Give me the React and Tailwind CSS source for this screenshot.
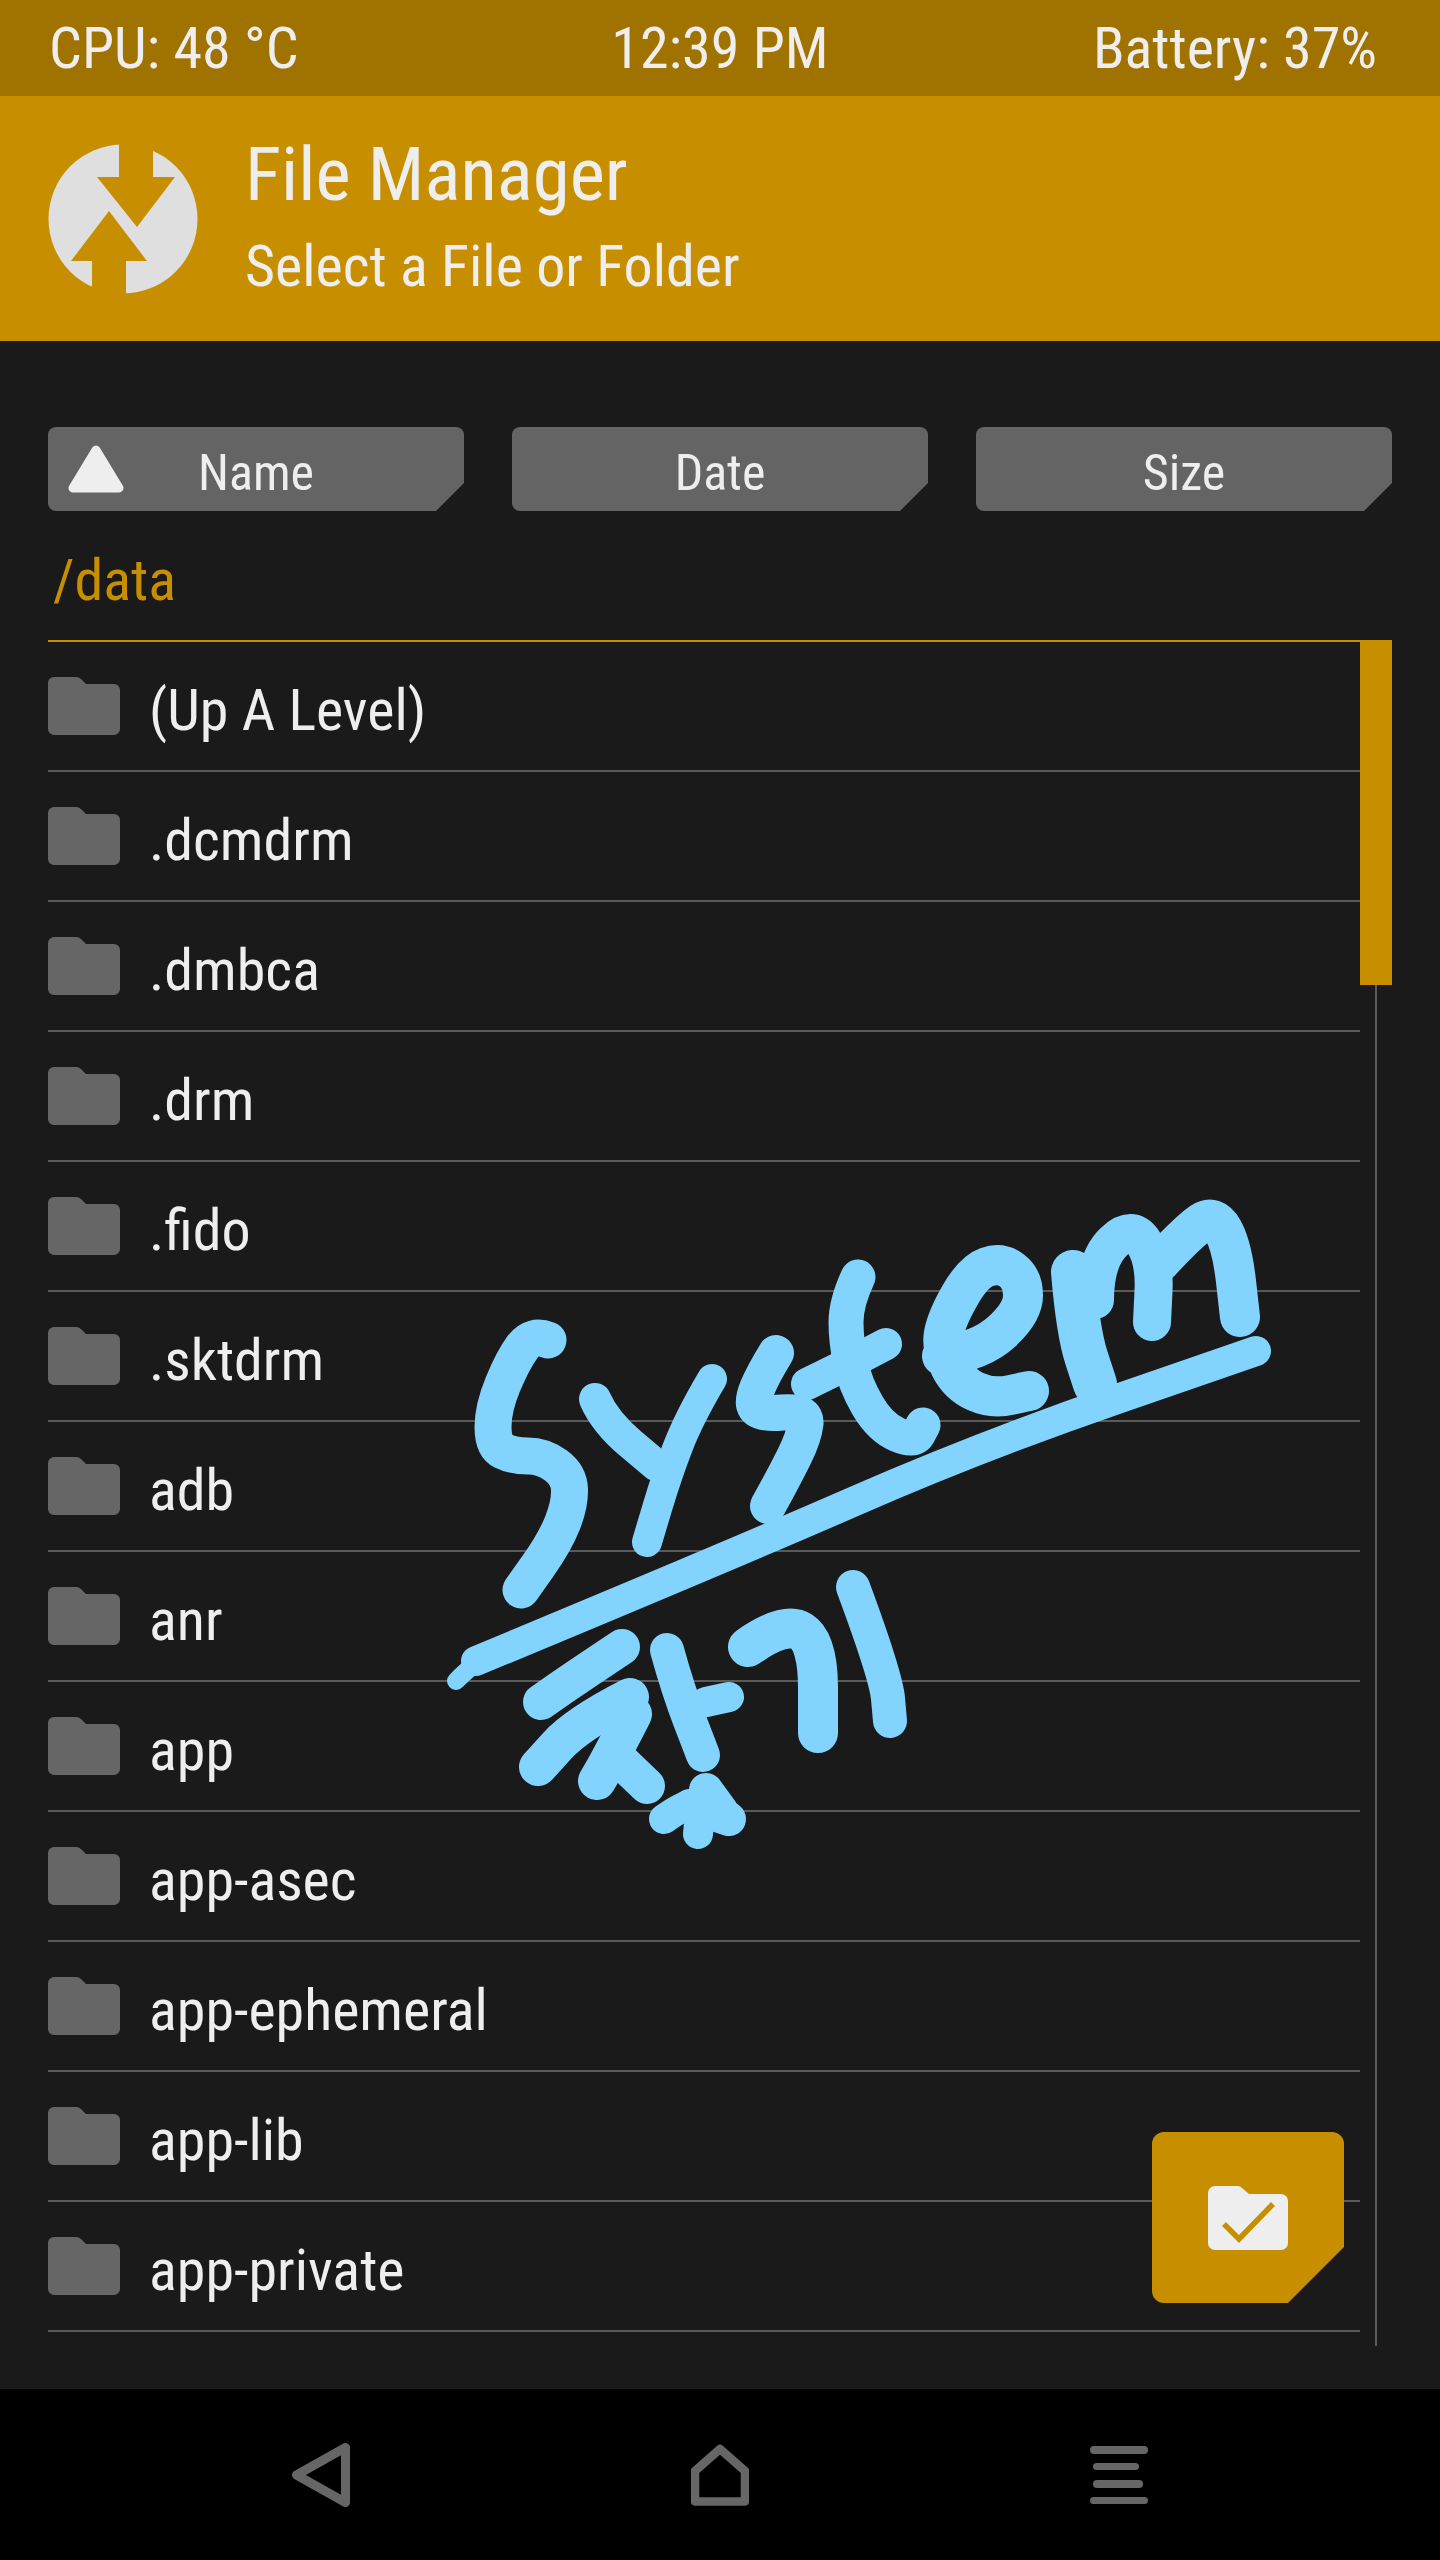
const folders = ['(Up A Level)', '.dcmdrm', '.dmbca', '.drm', '.fido', '.sktdrm', 'adb', 'anr', 'app', 'app-asec', 'app-ephemeral', 'app-lib', 'app-private']

// freehand annotation on top of the screenshot, traced as [width, points]
const scribble = [
  [37, [[548, 1340], [532, 1334], [513, 1360], [493, 1408], [493, 1446], [513, 1456], [543, 1456], [569, 1475], [570, 1504], [555, 1542], [521, 1590]]],
  [32, [[595, 1399], [605, 1422], [656, 1465]]],
  [30, [[712, 1379], [689, 1418], [667, 1475], [647, 1542]]],
  [36, [[776, 1353], [751, 1394], [757, 1415], [807, 1410], [804, 1437], [785, 1475], [768, 1506]]],
  [35, [[858, 1277], [846, 1303], [846, 1341], [855, 1384], [880, 1427], [914, 1442], [923, 1425]]],
  [32, [[807, 1384], [846, 1365], [886, 1344]]],
  [40, [[942, 1356], [981, 1351], [1023, 1312], [1023, 1279], [1001, 1262], [973, 1272], [945, 1322], [942, 1351], [959, 1384], [992, 1399], [1029, 1391]]],
  [44, [[1073, 1272], [1078, 1332], [1095, 1384]]],
  [38, [[1095, 1300], [1095, 1260], [1132, 1224], [1155, 1260], [1152, 1322]]],
  [40, [[1160, 1262], [1189, 1231], [1214, 1214], [1232, 1246], [1240, 1317]]],
  [30, [[476, 1661], [729, 1556], [981, 1446], [1256, 1351]]],
  [18, [[456, 1681], [476, 1661], [500, 1650]]],
  [36, [[622, 1647], [571, 1681], [541, 1702]]],
  [38, [[630, 1697], [577, 1724], [538, 1767]]],
  [38, [[633, 1714], [611, 1757], [597, 1781]]],
  [36, [[622, 1762], [647, 1786]]],
  [34, [[667, 1650], [678, 1690], [703, 1755]]],
  [30, [[706, 1702], [729, 1697]]],
  [40, [[748, 1647], [785, 1621], [818, 1642], [818, 1733]]],
  [34, [[853, 1587], [886, 1676], [890, 1721]]],
  [30, [[664, 1819], [702, 1792], [698, 1834]]],
  [34, [[690, 1806], [729, 1819]]],
  [34, [[706, 1790], [722, 1812]]],
]

function smoothPath(points) {
  let d = `M${points[0][0]} ${points[0][1]}`
  for (let i = 1; i < points.length - 1; i++) {
    const midX = (points[i][0] + points[i + 1][0]) / 2
    const midY = (points[i][1] + points[i + 1][1]) / 2
    d += ` Q${points[i][0]} ${points[i][1]} ${midX} ${midY}`
  }
  const last = points[points.length - 1]
  return `${d} L${last[0]} ${last[1]}`
}

function Logo() {
  return (
    <svg width="150" height="150" viewBox="0 0 150 150" className="shrink-0">
      <circle cx="75" cy="75" r="74.5" fill="#dfdfdf" />
      <polygon points="71,-2 105,-2 105,33 127,33 89,83 49,33 71,33" fill="#c78f00" />
      <polygon points="61,67 99,117 78,117 78,152 44,152 44,117 23,117" fill="#c78f00" />
    </svg>
  )
}

function SortButton({ label, arrow }) {
  return (
    <button className="relative flex-1 h-[84px] pt-[4px] bg-[#646464] rounded-[8px] text-[#eeeeee] text-[50px] leading-[84px] text-center [clip-path:polygon(0_0,100%_0,100%_calc(100%_-_28px),calc(100%_-_28px)_100%,0_100%)]">
      {arrow && (
        <svg width="56" height="48" viewBox="0 0 56 48" className="absolute left-[20px] top-[18px]">
          <polygon points="28,5 51,43 5,43" fill="#eeeeee" stroke="#eeeeee" strokeWidth="9" strokeLinejoin="round" />
        </svg>
      )}
      {label}
    </button>
  )
}

function FolderRow({ name }) {
  return (
    <div className="h-[130px] flex items-center gap-[29px] border-b-2 border-[#5a5a5a]">
      <svg width="72" height="58" viewBox="0 0 72 58" className="shrink-0">
        <path d="M6 0H28Q31 0 33 2L38 7H66A6 6 0 0 1 72 13V52A6 6 0 0 1 66 58H6A6 6 0 0 1 0 52V6A6 6 0 0 1 6 0Z" fill="#666666" />
      </svg>
      <span className="text-[58px] leading-none pt-[8px] text-[#eeeeee]">{name}</span>
    </div>
  )
}

export default function App() {
  return (
    <div className="relative w-[1440px] h-[2560px] flex flex-col bg-[#1a1a1a] overflow-hidden font-['Roboto',sans-serif] font-stretch-condensed">
      {/* Status bar */}
      <div className="h-[96px] bg-[#a07200] grid grid-cols-3 items-center px-[49px] text-[58px] leading-none text-[#eeeeee]">
        <span>CPU: 48 °C</span>
        <span className="text-center">12:39 PM</span>
        <span className="text-right pr-[14px]">Battery: 37%</span>
      </div>

      {/* Header */}
      <div className="h-[245px] bg-[#c78f00] flex items-center gap-[47px] pl-[48px] text-[#eeeeee]">
        <Logo />
        <div className="flex flex-col -mt-[4px]">
          <span className="text-[75px] leading-[84px]">File Manager</span>
          <span className="text-[58px] leading-[72px] mt-[14px]">Select a File or Folder</span>
        </div>
      </div>

      {/* Browser */}
      <div className="flex-1 flex flex-col px-12 pt-[86px]">
        <div className="flex gap-12">
          <SortButton label="Name" arrow />
          <SortButton label="Date" />
          <SortButton label="Size" />
        </div>
        <div className="h-[129px] pl-[5px] pt-[8px] flex items-center text-[58px] leading-none text-[#c78f00]">/data</div>
        <div className="flex border-t-2 border-[#c78f00] h-[1706px]">
          <div className="w-[1312px]">
            {folders.map((name) => (
              <FolderRow key={name} name={name} />
            ))}
          </div>
          <div className="w-8 -mt-[2px] flex flex-col items-center">
            <div className="w-8 h-[345px] shrink-0 bg-[#c78f00]" />
            <div className="w-[2px] flex-1 bg-[#5a5a5a]" />
          </div>
        </div>
      </div>

      {/* Nav bar */}
      <div className="h-[171px] bg-black flex items-center justify-center gap-[341px]">
        <svg width="58" height="64" viewBox="0 0 58 64">
          <path d="M53.5 4.5V59.5L4.5 32Z" fill="none" stroke="#666666" strokeWidth="9" strokeLinejoin="round" />
        </svg>
        <svg width="58" height="62" viewBox="0 0 58 62">
          <path d="M29 5L54 27V57.5H4V27Z" fill="none" stroke="#666666" strokeWidth="8.5" strokeLinejoin="round" />
        </svg>
        <svg width="58" height="58" viewBox="0 0 58 58" fill="#666666">
          <rect x="0" y="0" width="58" height="8" rx="4" />
          <rect x="3" y="17" width="46" height="7" rx="3.5" />
          <rect x="3" y="34" width="50" height="8" rx="4" />
          <rect x="0" y="51" width="58" height="7" rx="3.5" />
        </svg>
      </div>

      {/* Select folder button */}
      <button className="absolute right-[96px] bottom-[257px] w-[192px] h-[171px] flex items-center justify-center bg-[#c78f00] rounded-[12px] [clip-path:polygon(0_0,100%_0,100%_calc(100%_-_56px),calc(100%_-_56px)_100%,0_100%)]">
        <svg width="80" height="64" viewBox="0 0 80 64">
          <path d="M7 0H30Q32 0 34 2L41 8H73A7 7 0 0 1 80 15V57A7 7 0 0 1 73 64H7A7 7 0 0 1 0 57V7A7 7 0 0 1 7 0Z" fill="#eeeeee" />
          <path d="M16 38L31 53L65 18" fill="none" stroke="#c78f00" strokeWidth="5.5" />
        </svg>
      </button>

      {/* Handwritten annotation */}
      <svg width="1440" height="2560" viewBox="0 0 1440 2560" className="absolute inset-0 pointer-events-none">
        <g fill="none" stroke="#82d4ff" strokeLinecap="round" strokeLinejoin="round">
          {scribble.map(([width, points], i) => (
            <path key={i} d={smoothPath(points)} strokeWidth={width} />
          ))}
        </g>
      </svg>
    </div>
  )
}
